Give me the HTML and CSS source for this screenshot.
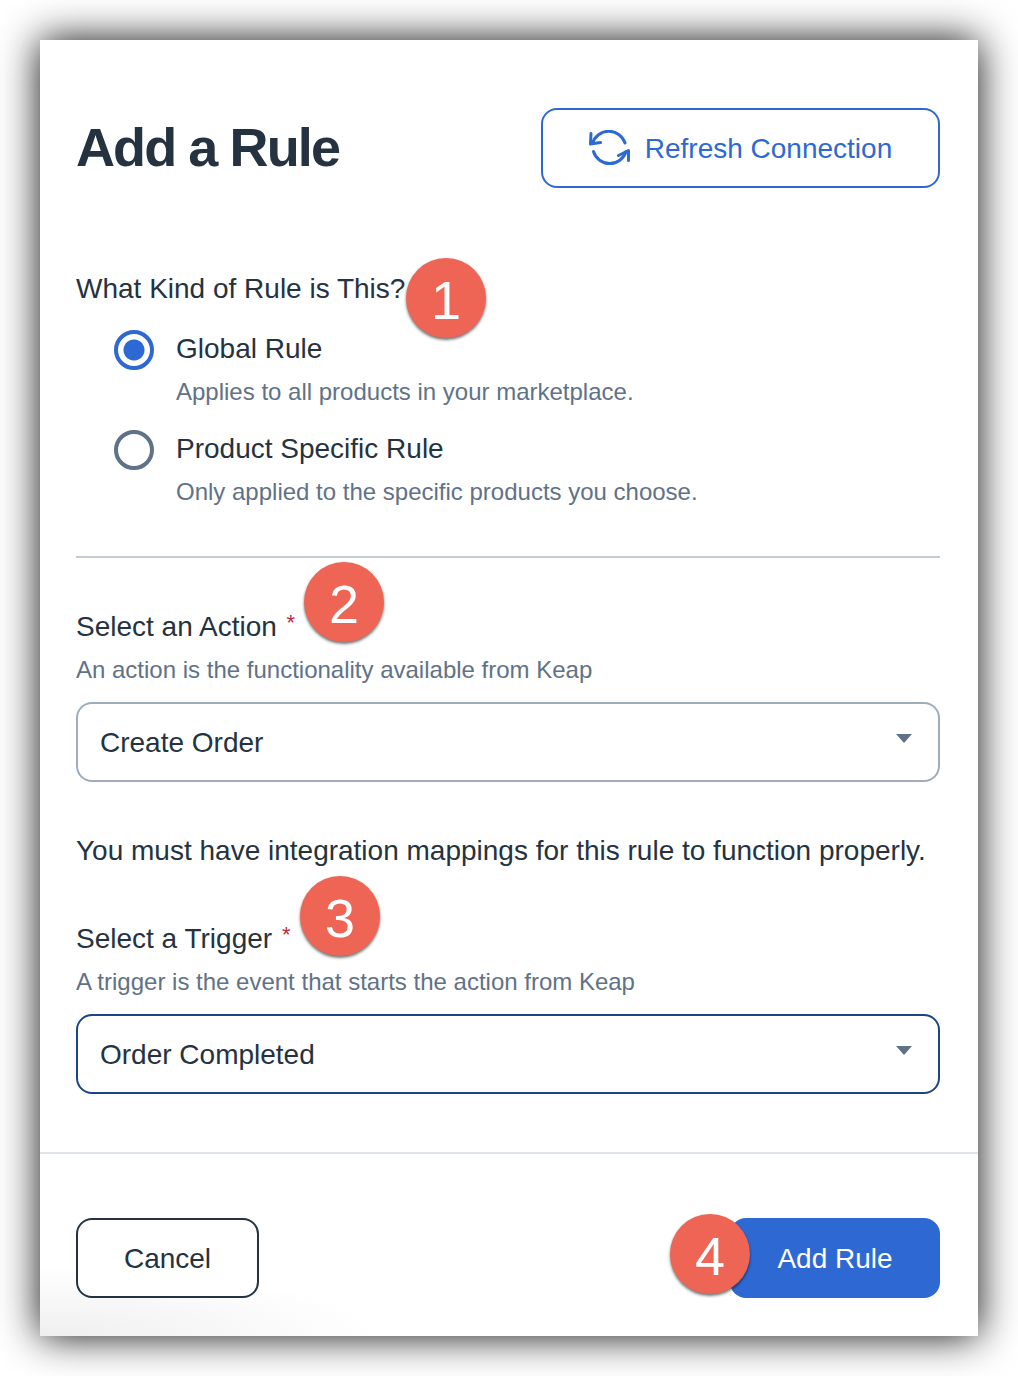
FILE: index.html
```html
<!DOCTYPE html>
<html>
<head>
	<title>Add a Rule</title>
	<link rel="stylesheet" href="styles.css">
</head>
<body>
	<div class="modal">
		<div class="modal_body">
			<div class="header">
				<h1 class="title">Add a Rule</h1>
				<button class="btn btn_refresh">
					<svg class="refresh_icon" width="42" height="36" viewBox="0 0 42 36" fill="none" stroke="currentColor" stroke-width="3" stroke-linecap="round" stroke-linejoin="round">
						<path d="M3.500 13.500A17 17 0 0 1 36 13"/>
						<path d="M2 3.500 1.500 14 11.500 12.500"/>
						<path d="M4.500 21.500A17 17 0 0 0 37 21.500"/>
						<path d="M39.500 30.500 39.500 20.500 29.500 25.500"/>
					</svg>
					Refresh Connection
				</button>
			</div>

			<div class="kind">
				<div class="label">What Kind of Rule is This?</div>
				<div class="options">
					<div class="option">
						<span class="radio radio_on"></span>
						<div class="option_text">
							<div class="label">Global Rule</div>
							<div class="hint">Applies to all products in your marketplace.</div>
						</div>
					</div>
					<div class="option">
						<span class="radio"></span>
						<div class="option_text">
							<div class="label">Product Specific Rule</div>
							<div class="hint">Only applied to the specific products you choose.</div>
						</div>
					</div>
				</div>
			</div>

			<hr class="rule">

			<div class="field field_action">
				<div class="label">Select an Action <span class="required">*</span></div>
				<div class="hint">An action is the functionality available from Keap</div>
				<div class="select">Create Order<span class="caret"></span></div>
			</div>

			<div class="label notice">You must have integration mappings for this rule to function properly.</div>

			<div class="field field_trigger">
				<div class="label">Select a Trigger <span class="required">*</span></div>
				<div class="hint">A trigger is the event that starts the action from Keap</div>
				<div class="select select_focus">Order Completed<span class="caret"></span></div>
			</div>
		</div>

		<div class="footer">
			<button class="btn btn_cancel">Cancel</button>
			<button class="btn btn_add">Add Rule</button>
		</div>

		<div class="badge badge_1">1</div>
		<div class="badge badge_2">2</div>
		<div class="badge badge_3">3</div>
		<div class="badge badge_4">4</div>
	</div>
</body>
</html>
```

FILE: styles.css
```css
html, body {
	margin: 0;
	background-color: #fff;
}

body {
	height: 1376px;
	padding: 40px;
	box-sizing: border-box;
	overflow: hidden;
	font-family: "Liberation Sans", Arial, sans-serif;
	color: #25323f;
}

.modal {
	position: relative;
	height: 1296px;
	background-color: #fff;
	background-image: radial-gradient(ellipse 340px 70px at 0 100%, #efefef, #fff);
	box-shadow: 0 0 38px rgba(0, 0, 0, .95);
}

.modal_body {
	padding: 68px 38px 0 36px;
	height: 1044px;
	border-bottom: 2px solid #dfe4e9;
}

.header {
	display: flex;
	justify-content: space-between;
	align-items: center;
}

.title {
	margin: 0;
	padding-bottom: 2px;
	font-size: 54px;
	font-weight: bold;
	letter-spacing: -1.9px;
	line-height: 78px;
}

.btn {
	display: flex;
	align-items: center;
	justify-content: center;
	height: 80px;
	box-sizing: border-box;
	padding: 2px 0 0;
	border-radius: 16px;
	background: #fff;
	font-family: inherit;
	font-size: 28px;
}

.btn_refresh {
	width: 399px;
	border: 2px solid #2e69d3;
	color: #2e69d3;
}

.refresh_icon {
	margin: 0 14px 2px 0;
}

.btn_cancel {
	width: 183px;
	border: 2px solid #25323f;
	color: #25323f;
}

.btn_add {
	width: 210px;
	border: 0;
	background: #2e69d3;
	color: #fff;
}

.label {
	font-size: 28px;
	line-height: 40px;
}

.hint {
	margin-top: 4px;
	font-size: 24px;
	line-height: 40px;
	color: #5f7287;
}

.kind {
	margin-top: 80px;
}

.kind .label {
	line-height: 42px;
	margin-bottom: -2px;
}

.options {
	display: flex;
	flex-direction: column;
	gap: 18px;
	margin-top: 22px;
	padding-left: 38px;
}

.option {
	display: flex;
	gap: 22px;
}

.option_text {
	margin-top: -2px;
}

.radio {
	width: 40px;
	height: 40px;
	box-sizing: border-box;
	border: 4px solid #5f7287;
	border-radius: 50%;
}

.radio_on {
	border-color: #2e69d3;
	background: radial-gradient(circle, #2e69d3 10px, #fff 11px);
}

.rule {
	margin: 44px 0 0;
	border: 0;
	height: 2px;
	background-color: #c5ccd3;
}

.field .hint {
	margin-top: 3px;
}

.field_action {
	margin-top: 49px;
}

.required {
	margin-left: 2px;
	color: #c8283c;
	font-size: 22px;
	line-height: 0;
	vertical-align: 6px;
}

.select {
	position: relative;
	display: flex;
	align-items: center;
	height: 80px;
	margin-top: 12px;
	padding: 2px 22px 0;
	box-sizing: border-box;
	border: 2px solid #9fadbb;
	border-radius: 16px;
	font-size: 28px;
}

.select_focus {
	border-color: #1c4587;
}

.caret {
	position: absolute;
	right: 26px;
	top: 30px;
	border-left: 8px solid transparent;
	border-right: 8px solid transparent;
	border-top: 9px solid #5f7287;
}

.notice {
	margin-top: 48px;
	line-height: 42px;
	margin-bottom: -2px;
}

.field_trigger {
	margin-top: 49px;
}

.footer {
	display: flex;
	justify-content: space-between;
	padding: 64px 38px 0 36px;
}

/* numbered callouts lie over the form */
.badge {
	position: absolute;
	width: 80px;
	height: 80px;
	border-radius: 50%;
	background-color: #ee6556;
	box-shadow: 0 2px 3px rgba(0, 0, 0, .55);
	color: #fff;
	font-size: 54px;
	line-height: 84px;
	text-align: center;
}

.badge_1 { left: 366px; top: 218px; }
.badge_2 { left: 264px; top: 522px; }
.badge_3 { left: 260px; top: 836px; }
.badge_4 { left: 630px; top: 1174px; }
```
